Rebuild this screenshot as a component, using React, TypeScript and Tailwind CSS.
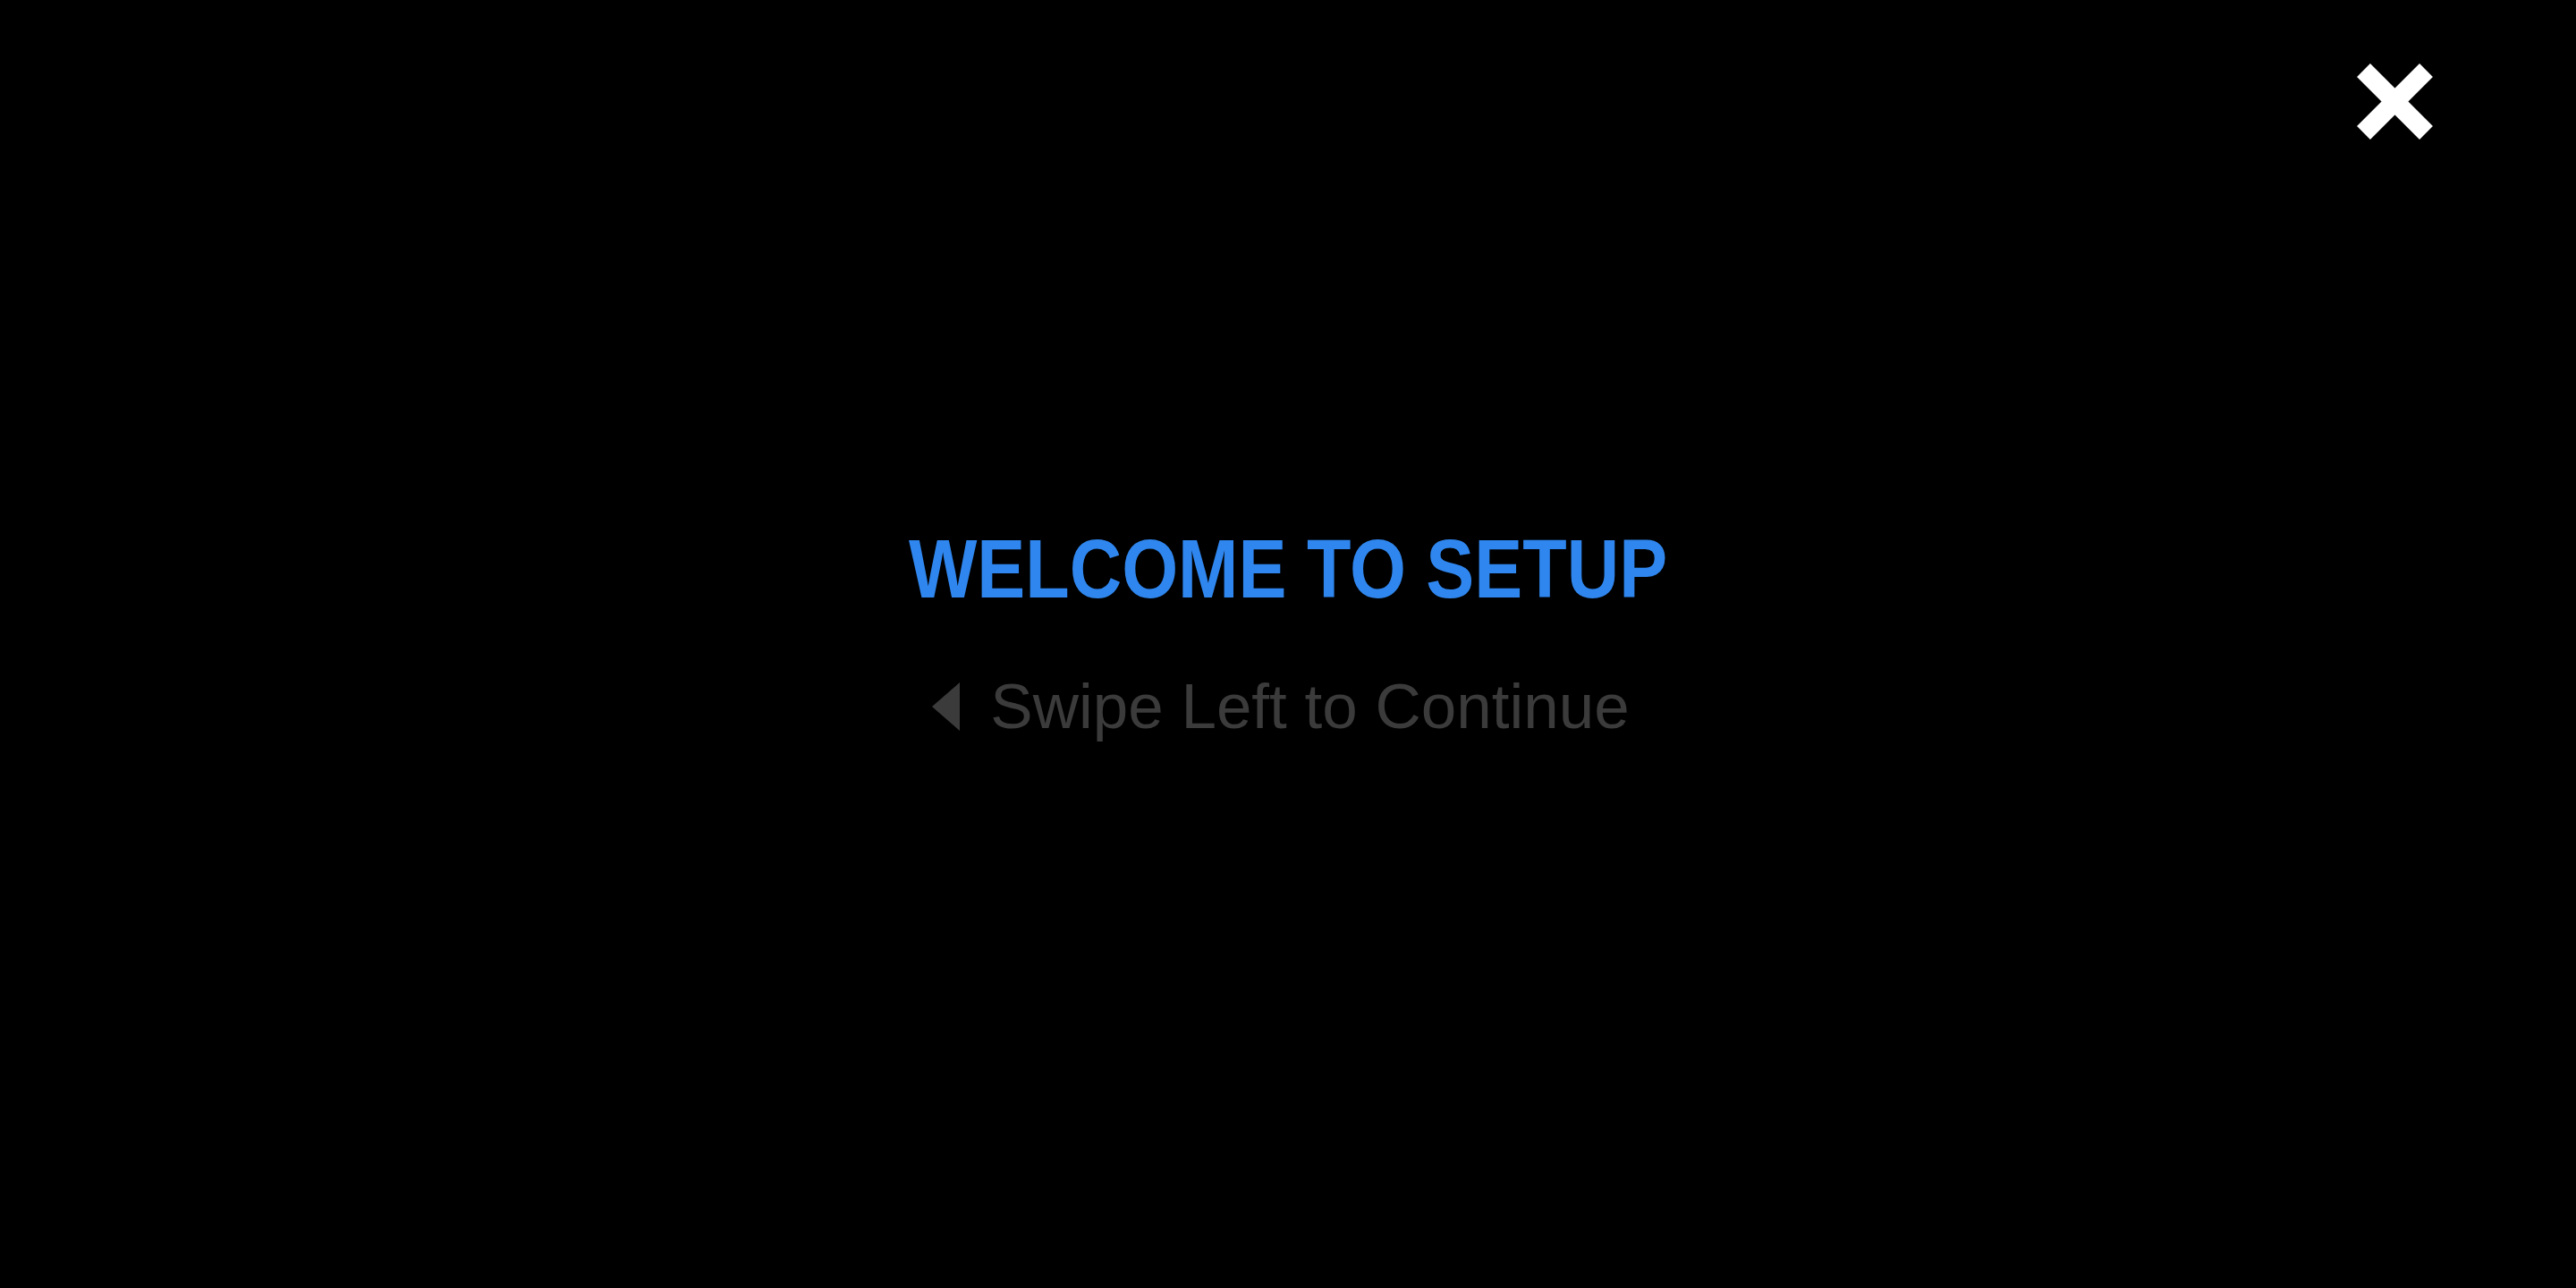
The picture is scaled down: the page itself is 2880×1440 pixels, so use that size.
import React from 'react';

const CloseIcon: React.FC = () => (
  <svg width="85" height="85" viewBox="0 0 85 85" aria-hidden="true">
    <line x1="7.5" y1="7.5" x2="77.5" y2="77.5" stroke="#ffffff" strokeWidth="21" />
    <line x1="77.5" y1="7.5" x2="7.5" y2="77.5" stroke="#ffffff" strokeWidth="21" />
  </svg>
);

const LeftArrow: React.FC = () => (
  <svg width="31" height="54" viewBox="0 0 31 54" aria-hidden="true">
    <polygon points="31,0 31,54 0,27" fill="#3b3b3b" />
  </svg>
);

const App: React.FC = () => {
  return (
    <div className="relative w-full h-screen bg-black overflow-hidden">
      {/* Close */}
      <button className="absolute top-[71px] right-[160px] w-[85px] h-[85px]">
        <CloseIcon />
      </button>

      {/* Welcome block */}
      <div className="flex flex-col items-center pt-[590px]">
        <div className="w-[849px] h-[93px]">
          <h1
            className="inline-block origin-left scale-x-[0.87] whitespace-nowrap text-[93px] leading-none font-bold text-[#2f86ee]"
            style={{ fontFamily: '"Liberation Sans", Arial, sans-serif' }}
          >
            WELCOME TO SETUP
          </h1>
        </div>

        <div className="flex items-center gap-[34px] mt-[71px] mr-[16px]">
          <LeftArrow />
          <span
            className="whitespace-nowrap text-[71px] leading-none text-[#3b3b3b]"
            style={{ fontFamily: '"Liberation Sans", Arial, sans-serif' }}
          >
            Swipe Left to Continue
          </span>
        </div>
      </div>
    </div>
  );
};

export default App;
